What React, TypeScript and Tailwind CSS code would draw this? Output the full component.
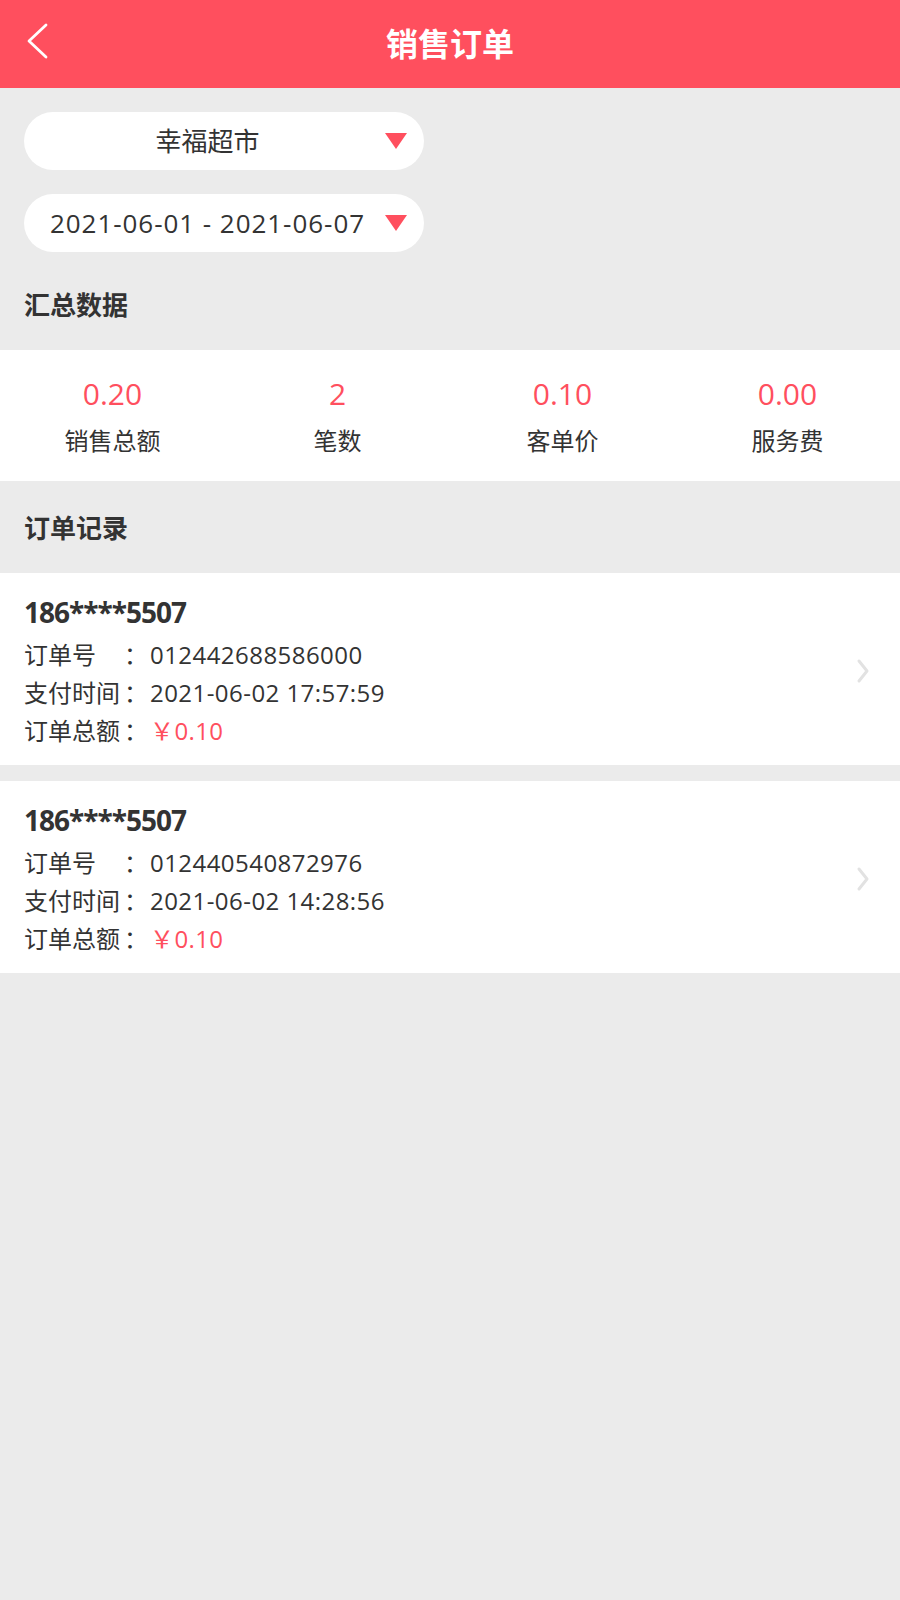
import React from "react";

const FONT = { fontFamily: '"Open Sans", "Noto Sans CJK SC", sans-serif' };

function Triangle() {
  return (
    <svg width="22" height="16" viewBox="0 0 22 16" className="shrink-0">
      <path d="M0 0 H22 L11 16 Z" fill="#ff4f5e" />
    </svg>
  );
}

function Chevron() {
  return (
    <svg width="14" height="26" viewBox="0 0 14 26" className="shrink-0">
      <path d="M3 3 L11 13 L3 23" fill="none" stroke="#e2e2e2" strokeWidth="3" strokeLinecap="round" strokeLinejoin="round" />
    </svg>
  );
}

type Order = { phone: string; no: string; time: string; amount: string };

const orders: Order[] = [
  { phone: "186****5507", no: "012442688586000", time: "2021-06-02 17:57:59", amount: "￥0.10" },
  { phone: "186****5507", no: "012440540872976", time: "2021-06-02 14:28:56", amount: "￥0.10" },
];

function Row({ label, value, red }: { label: string; value: string; red?: boolean }) {
  return (
    <div className="flex h-[38px] items-center text-[24px]">
      <span className="w-[100px] shrink-0">{label}</span>
      <span className="w-[26px] shrink-0">：</span>
      <span className={red ? "tracking-[0.4px] text-[#ff4f5e]" : "tracking-[0.45px]"}>{value}</span>
    </div>
  );
}

export default function App() {
  const stats = [
    { v: "0.20", l: "销售总额" },
    { v: "2", l: "笔数" },
    { v: "0.10", l: "客单价" },
    { v: "0.00", l: "服务费" },
  ];
  return (
    <div className="min-h-[1600px] w-[900px] bg-[#ebebeb] text-[#333333]" style={FONT}>
      <header className="relative flex h-[88px] items-center justify-center bg-[#ff4f5e]">
        <svg width="30" height="40" viewBox="0 0 30 40" className="absolute left-[22px] top-[21px]">
          <path d="M24 4 L7 20 L24 36" fill="none" stroke="#ffffff" strokeWidth="2.8" strokeLinecap="round" strokeLinejoin="round" />
        </svg>
        <h1 className="text-[32px] font-bold leading-[40px] text-white">销售订单</h1>
      </header>

      <div className="flex flex-col gap-[24px] px-[24px] pt-[24px]">
        <div className="flex h-[58px] w-[400px] items-center rounded-full bg-white pl-[6px] pr-[17px]">
          <span className="flex-1 text-center text-[26px] leading-[36px]">幸福超市</span>
          <Triangle />
        </div>
        <div className="flex h-[58px] w-[400px] items-center rounded-full bg-white pl-[6px] pr-[17px]">
          <span className="flex-1 text-center text-[26px] leading-[36px] tracking-[0.95px]">2021-06-01 - 2021-06-07</span>
          <Triangle />
        </div>
      </div>

      <h2 className="mb-[27px] mt-[35px] px-[24px] text-[26px] font-bold leading-[36px]">汇总数据</h2>

      <div className="grid grid-cols-4 bg-white pb-[22px] pt-[24px]">
        {stats.map((s) => (
          <div key={s.l} className="flex flex-col items-center">
            <span className="text-[30px] leading-[40px] text-[#ff4f5e]">{s.v}</span>
            <span className="mt-[9px] text-[24px] leading-[36px]">{s.l}</span>
          </div>
        ))}
      </div>

      <h2 className="px-[24px] pb-[27px] pt-[29px] text-[26px] font-bold leading-[36px]">订单记录</h2>

      <div className="flex flex-col gap-[16px]">
        {orders.map((o) => (
          <div key={o.no} className="flex items-center bg-white pb-[15px] pl-[24px] pr-[30px] pt-[19px]">
            <div className="flex-1">
              <div className="text-[28px] font-bold leading-[40px] tracking-[-1px]">{o.phone}</div>
              <div className="mt-[4px]">
                <Row label="订单号" value={o.no} />
                <Row label="支付时间" value={o.time} />
                <Row label="订单总额" value={o.amount} red />
              </div>
            </div>
            <Chevron />
          </div>
        ))}
      </div>
    </div>
  );
}
